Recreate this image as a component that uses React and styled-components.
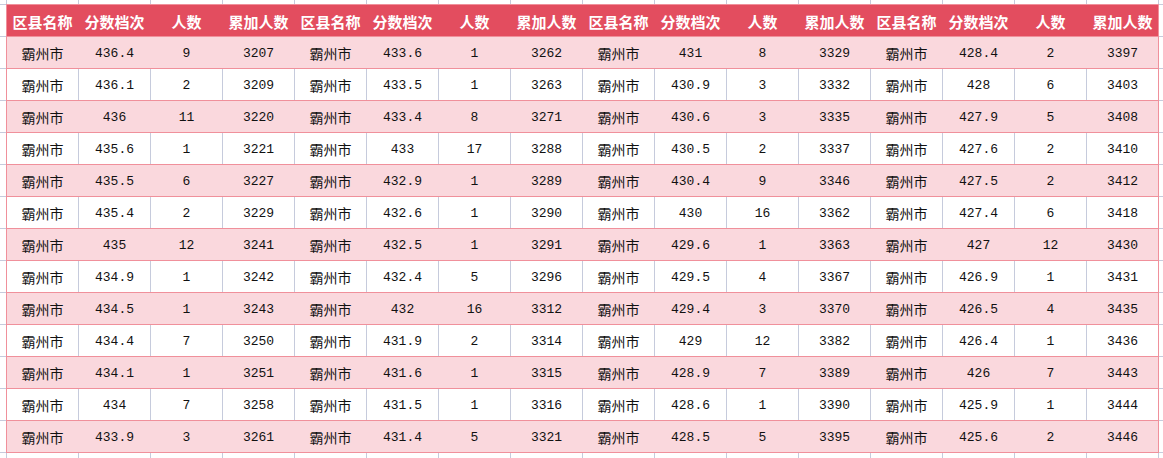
import styled, {createGlobalStyle} from 'styled-components';

const GlobalStyle = createGlobalStyle`
  html, body {
    margin: 0;
    padding: 0;
    background: #fff;
  }
`

const GRID = '#c6cbdc';
const PINK_LINE = '#f0909b';
const PINK_ROW = '#fad8dd';
const HEAD = '#e34d5f';

const Sheet = styled.div`
  min-height: 100vh;
  box-sizing: border-box;
  padding: 4px 0 0 6px;
  background-color: #fff;
  background-image:
    repeating-linear-gradient(to right, ${GRID} 0 1px, transparent 1px 72px),
    repeating-linear-gradient(to bottom, ${GRID} 0 1px, transparent 1px 32px);
  background-position: 6px 0, 0 4px;
`

const Table = styled.div`
  display: inline-grid;
  row-gap: 1px;
  border: 1px solid ${PINK_LINE};
  background: ${PINK_LINE};
`

const Row = styled.div`
  display: grid;
  grid-template-columns: repeat(16, 71px);
  grid-auto-rows: 31px;
  column-gap: 1px;
  background: ${p => (p.$head ? HEAD : p.$striped ? PINK_ROW : GRID)};
`

const HeadCell = styled.div`
  display: flex;
  align-items: center;
  justify-content: center;
  padding-top: 2px;
  background: ${HEAD};
  color: #fff;
  font-family: "Noto Sans CJK SC", sans-serif;
  font-weight: 700;
  font-size: 15px;
  white-space: nowrap;
`

const Cell = styled.div`
  display: flex;
  align-items: center;
  justify-content: center;
  padding-top: 1px;
  background: ${p => (p.$striped ? PINK_ROW : '#fff')};
  color: #111;
  font-family: ${p => (p.$cjk ? '"Noto Sans CJK SC", sans-serif' : '"Liberation Mono", monospace')};
  font-size: ${p => (p.$cjk ? '14px' : '13px')};
  white-space: nowrap;
`

const headers = ['区县名称', '分数档次', '人数', '累加人数'];

// score / headcount for each of the four column groups
const groups = [
  [['436.4', 9], ['436.1', 2], ['436', 11], ['435.6', 1], ['435.5', 6], ['435.4', 2], ['435', 12], ['434.9', 1], ['434.5', 1], ['434.4', 7], ['434.1', 1], ['434', 7], ['433.9', 3]],
  [['433.6', 1], ['433.5', 1], ['433.4', 8], ['433', 17], ['432.9', 1], ['432.6', 1], ['432.5', 1], ['432.4', 5], ['432', 16], ['431.9', 2], ['431.6', 1], ['431.5', 1], ['431.4', 5]],
  [['431', 8], ['430.9', 3], ['430.6', 3], ['430.5', 2], ['430.4', 9], ['430', 16], ['429.6', 1], ['429.5', 4], ['429.4', 3], ['429', 12], ['428.9', 7], ['428.6', 1], ['428.5', 5]],
  [['428.4', 2], ['428', 6], ['427.9', 5], ['427.6', 2], ['427.5', 2], ['427.4', 6], ['427', 12], ['426.9', 1], ['426.5', 4], ['426.4', 1], ['426', 7], ['425.9', 1], ['425.6', 2]],
];

function withTotals() {
  let total = 3198;
  return groups.map(g => g.map(([score, n]) => {
    total += n;
    return [score, n, total];
  }));
}

export default function App() {
  const data = withTotals();
  const rows = data[0].map((_, i) => data.map(g => g[i]));

  return (
    <>
      <GlobalStyle />
      <Sheet>
        <Table>
          <Row $head>
            {groups.map((_, g) => headers.map(h => <HeadCell key={g + h}>{h}</HeadCell>))}
          </Row>
          {rows.map((row, i) => {
            const striped = i % 2 === 0;
            return (
              <Row key={i} $striped={striped}>
                {row.map(([score, n, total], g) => [
                  <Cell key={g + 'a'} $cjk $striped={striped}>霸州市</Cell>,
                  <Cell key={g + 'b'} $striped={striped}>{score}</Cell>,
                  <Cell key={g + 'c'} $striped={striped}>{n}</Cell>,
                  <Cell key={g + 'd'} $striped={striped}>{total}</Cell>,
                ])}
              </Row>
            );
          })}
        </Table>
      </Sheet>
    </>
  );
}
